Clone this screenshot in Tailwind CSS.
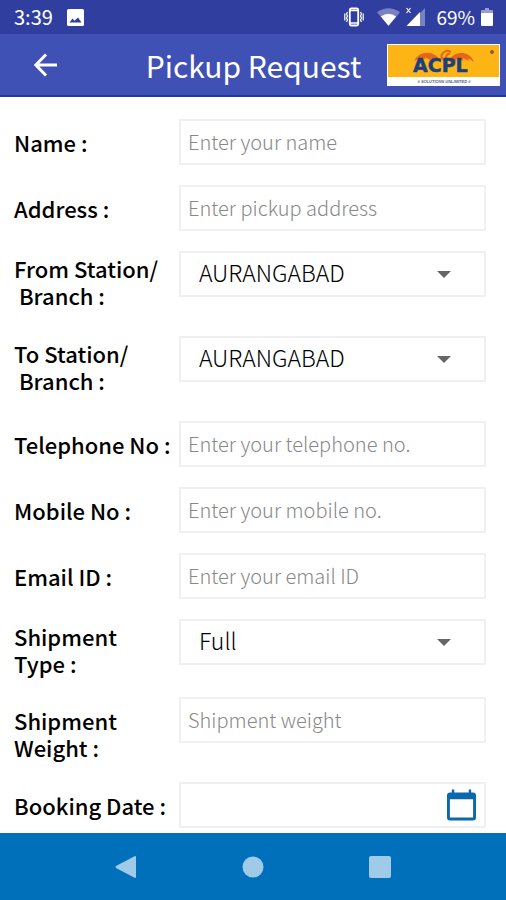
<!DOCTYPE html>
<html lang="en">
<head>
    <meta charset="UTF-8">
    <meta name="viewport" content="width=device-width, initial-scale=1.0">
    <title>Pickup Request</title>
    <script src="https://cdn.jsdelivr.net/npm/@tailwindcss/browser@4"></script>
</head>
<body class="h-screen flex flex-col bg-white text-black font-['Noto_Sans_CJK_SC','Noto_Sans',sans-serif]">

    <!-- Status bar -->
    <div class="h-[34px] shrink-0 bg-[#303f9f] text-white flex items-center justify-between pl-[14px] pr-[13px]">
        <div class="flex items-center gap-[14px]">
            <span class="text-[20px] leading-6">3:39</span>
            <svg class="w-[17px] h-[17px]" viewBox="0 0 17 17">
                <rect width="17" height="17" rx="1.500" fill="#fff"/>
                <path d="M2.500 13.500 5.500 9.500l2 2.300L11 8.500l3.500 5z" fill="#303f9f"/>
            </svg>
        </div>
        <div class="flex items-center">
            <svg class="w-5 h-5 mr-3" viewBox="0 0 20 20" fill="none" stroke="#fff">
                <rect x="5.800" y="1.500" width="8.400" height="17" rx="1.500" stroke-width="1.800"/>
                <path d="M6 3.500h8M6 16h8" stroke-width="1.500"/>
                <path d="M3.500 5 2.500 7l1 2-1 2 1 2-1 2M.8 6.500v7M16.500 5l1 2-1 2 1 2-1 2 1 2M19.200 6.500v7" stroke-width="1.200"/>
            </svg>
            <svg class="w-[25px] h-5 mr-1" viewBox="0 0 26 20">
                <path d="M13 19 1 5Q13-3 25 5z" fill="#fff" fill-opacity=".35"/>
                <path d="M13 19 5 9.500q8-6 16 0z" fill="#fff"/>
            </svg>
            <svg class="w-[21px] h-5 mr-[10px]" viewBox="0 0 21 20">
                <path d="M20 1v18H2z" fill="#fff" fill-opacity=".35"/>
                <path d="M15 5v14H1.500z" fill="#fff"/>
                <path d="m1.500 1 4 5m0-5-4 5" stroke="#fff" stroke-width="1.200"/>
            </svg>
            <span class="text-[19px] leading-6 mr-[6px]">69%</span>
            <svg class="w-3 h-[18px]" viewBox="0 0 12 18">
                <path d="M4 0h4v2h3q1 0 1 1v3H0V3q0-1 1-1h3z" fill="#fff" fill-opacity=".5"/>
                <path d="M0 5h12v12q0 1-1 1H1q-1 0-1-1z" fill="#fff"/>
            </svg>
        </div>
    </div>

    <!-- App bar -->
    <header class="h-[63px] shrink-0 bg-[#3f51b5] border-b-2 border-[#1f3a9c] text-white flex items-center justify-between pl-[34px] pr-[6px]">
        <button type="button" aria-label="Back" class="w-6 h-6">
            <svg class="w-6 h-6" viewBox="0 0 24 24" fill="none" stroke="#fff" stroke-width="3">
                <path d="M23 12H2M12 1.500 1.800 12 12 22.500"/>
            </svg>
        </button>
        <h1 class="flex-1 text-center text-[30px] leading-9 pl-[62px] whitespace-nowrap">Pickup Request</h1>
        <svg class="w-[113px] h-[42px] shrink-0" viewBox="0 0 113 42" role="img" aria-label="ACPL">
            <rect width="113" height="42" fill="#fff"/>
            <rect x="1" y="1" width="111" height="32" fill="#fdb515"/>
            <g fill="#e8641b">
                <path d="M27 17q4-7 10-8 10-2 17 8l-5-2 1 3-6-4 1 3-7-4 1 2-5-1z"/>
                <path d="M62 16q5-8 14-7 8 1 11 9l-6-4 1 3-6-3v3l-6-3-1 3z"/>
            </g>
            <path d="M58 17q-6-4-2-8 4-4 8-1M59 15q0-6 4-5" fill="none" stroke="#e8641b" stroke-width="2"/>
            <text x="26" y="28" font-family="DejaVu Sans, sans-serif" font-size="19" font-weight="700" fill="#1d3f7d" stroke="#1d3f7d" stroke-width=".5">ACPL</text>
            <circle cx="105" cy="8" r="1.500" fill="#a0702a" stroke="#6b5a45"/>
            <text x="57" y="39" text-anchor="middle" font-family="Liberation Sans, sans-serif" font-size="4" font-weight="700" font-style="italic" fill="#55608a"># SOLUTIONS UNLIMITED #</text>
        </svg>
    </header>

    <!-- Form -->
    <main class="flex-1 min-h-0 overflow-hidden">
        <form class="flex flex-col gap-5 pt-[22px] pl-[14px] pr-5 text-[22px]">
            <div class="grid grid-cols-[165px_1fr] items-start">
                <label for="name" class="pt-[10px] leading-[27px] font-medium">Name :</label>
                <input id="name" type="text" placeholder="Enter your name" class="w-full h-[46px] border-2 border-[#f0f0f0] px-[7px] pb-[2px] text-[20px] font-light placeholder:text-[#888]">
            </div>
            <div class="grid grid-cols-[165px_1fr] items-start">
                <label for="address" class="pt-[10px] leading-[27px] font-medium">Address :</label>
                <input id="address" type="text" placeholder="Enter pickup address" class="w-full h-[46px] border-2 border-[#f0f0f0] px-[7px] pb-[2px] text-[20px] font-light placeholder:text-[#888]">
            </div>
            <div class="h-[65px] grid grid-cols-[165px_1fr] items-start">
                <label for="from" class="pt-1 leading-[27px] font-medium whitespace-nowrap">From Station/<br>&nbsp;Branch :</label>
                <div class="relative">
                    <select id="from" class="appearance-none w-full h-[46px] border-2 border-[#f0f0f0] bg-white pl-[18px] pr-14 pb-1 text-[23px] font-light">
                        <option>AURANGABAD</option>
                    </select>
                    <svg class="absolute right-[35px] top-5 w-[14px] h-[7px] pointer-events-none" viewBox="0 0 14 7"><path d="M0 0h14L7 7z" fill="#666"/></svg>
                </div>
            </div>
            <div class="h-[65px] grid grid-cols-[165px_1fr] items-start">
                <label for="to" class="pt-1 leading-[27px] font-medium whitespace-nowrap">To Station/<br>&nbsp;Branch :</label>
                <div class="relative">
                    <select id="to" class="appearance-none w-full h-[46px] border-2 border-[#f0f0f0] bg-white pl-[18px] pr-14 pb-1 text-[23px] font-light">
                        <option>AURANGABAD</option>
                    </select>
                    <svg class="absolute right-[35px] top-5 w-[14px] h-[7px] pointer-events-none" viewBox="0 0 14 7"><path d="M0 0h14L7 7z" fill="#666"/></svg>
                </div>
            </div>
            <div class="grid grid-cols-[165px_1fr] items-start">
                <label for="telephone" class="pt-[10px] leading-[27px] font-medium whitespace-nowrap">Telephone No :</label>
                <input id="telephone" type="tel" placeholder="Enter your telephone no." class="w-full h-[46px] border-2 border-[#f0f0f0] px-[7px] pb-[2px] text-[20px] font-light placeholder:text-[#888]">
            </div>
            <div class="grid grid-cols-[165px_1fr] items-start">
                <label for="mobile" class="pt-[10px] leading-[27px] font-medium">Mobile No :</label>
                <input id="mobile" type="tel" placeholder="Enter your mobile no." class="w-full h-[46px] border-2 border-[#f0f0f0] px-[7px] pb-[2px] text-[20px] font-light placeholder:text-[#888]">
            </div>
            <div class="grid grid-cols-[165px_1fr] items-start">
                <label for="email" class="pt-[10px] leading-[27px] font-medium">Email ID :</label>
                <input id="email" type="email" placeholder="Enter your email ID" class="w-full h-[46px] border-2 border-[#f0f0f0] px-[7px] pb-[2px] text-[20px] font-light placeholder:text-[#888]">
            </div>
            <div class="grid grid-cols-[165px_1fr] items-start">
                <label for="type" class="pt-1 leading-[27px] font-medium">Shipment<br>Type :</label>
                <div class="relative">
                    <select id="type" class="appearance-none w-full h-[46px] border-2 border-[#f0f0f0] bg-white pl-[18px] pr-14 pb-1 text-[23px] font-light">
                        <option>Full</option>
                    </select>
                    <svg class="absolute right-[35px] top-5 w-[14px] h-[7px] pointer-events-none" viewBox="0 0 14 7"><path d="M0 0h14L7 7z" fill="#666"/></svg>
                </div>
            </div>
            <div class="h-[65px] grid grid-cols-[165px_1fr] items-start">
                <label for="weight" class="pt-[10px] leading-[27px] font-medium">Shipment<br>Weight :</label>
                <input id="weight" type="text" placeholder="Shipment weight" class="w-full h-[46px] border-2 border-[#f0f0f0] px-[7px] pb-[2px] text-[20px] font-light placeholder:text-[#888]">
            </div>
            <div class="grid grid-cols-[165px_1fr] items-start">
                <label for="date" class="pt-[10px] leading-[27px] font-medium whitespace-nowrap">Booking Date :</label>
                <div class="flex items-center h-[46px] border-2 border-[#f0f0f0] pl-[7px] pr-2">
                    <input id="date" type="text" class="flex-1 min-w-0 h-full text-[20px] font-light outline-none">
                    <button type="button" aria-label="Pick a date">
                        <svg class="w-[29px] h-8" viewBox="0 0 30 32">
                            <path d="M5 0h2.500v3h15V0H25v3h2q3 0 3 3v23q0 3-3 3H3q-3 0-3-3V6q0-3 3-3h2zM3 10v19h24V10z" fill="#0c68ad" fill-rule="evenodd"/>
                        </svg>
                    </button>
                </div>
            </div>
        </form>
    </main>

    <!-- Navigation bar -->
    <nav class="h-[67px] shrink-0 bg-[#0070ba] flex items-center justify-center gap-[105px]">
        <button type="button" aria-label="Back">
            <svg class="w-[22px] h-[22px]" viewBox="0 0 22 22"><path d="M20 0q1 0 1 1v20q0 1-1 1L1 12q-1-1 0-2z" fill="#9fcbe9"/></svg>
        </button>
        <button type="button" aria-label="Home">
            <svg class="w-[22px] h-[22px]" viewBox="0 0 22 22"><circle cx="11" cy="11" r="10.500" fill="#9fcbe9"/></svg>
        </button>
        <button type="button" aria-label="Recent apps">
            <svg class="w-[22px] h-[22px]" viewBox="0 0 22 22"><rect width="22" height="22" rx="2" fill="#9fcbe9"/></svg>
        </button>
    </nav>

</body>
</html>
